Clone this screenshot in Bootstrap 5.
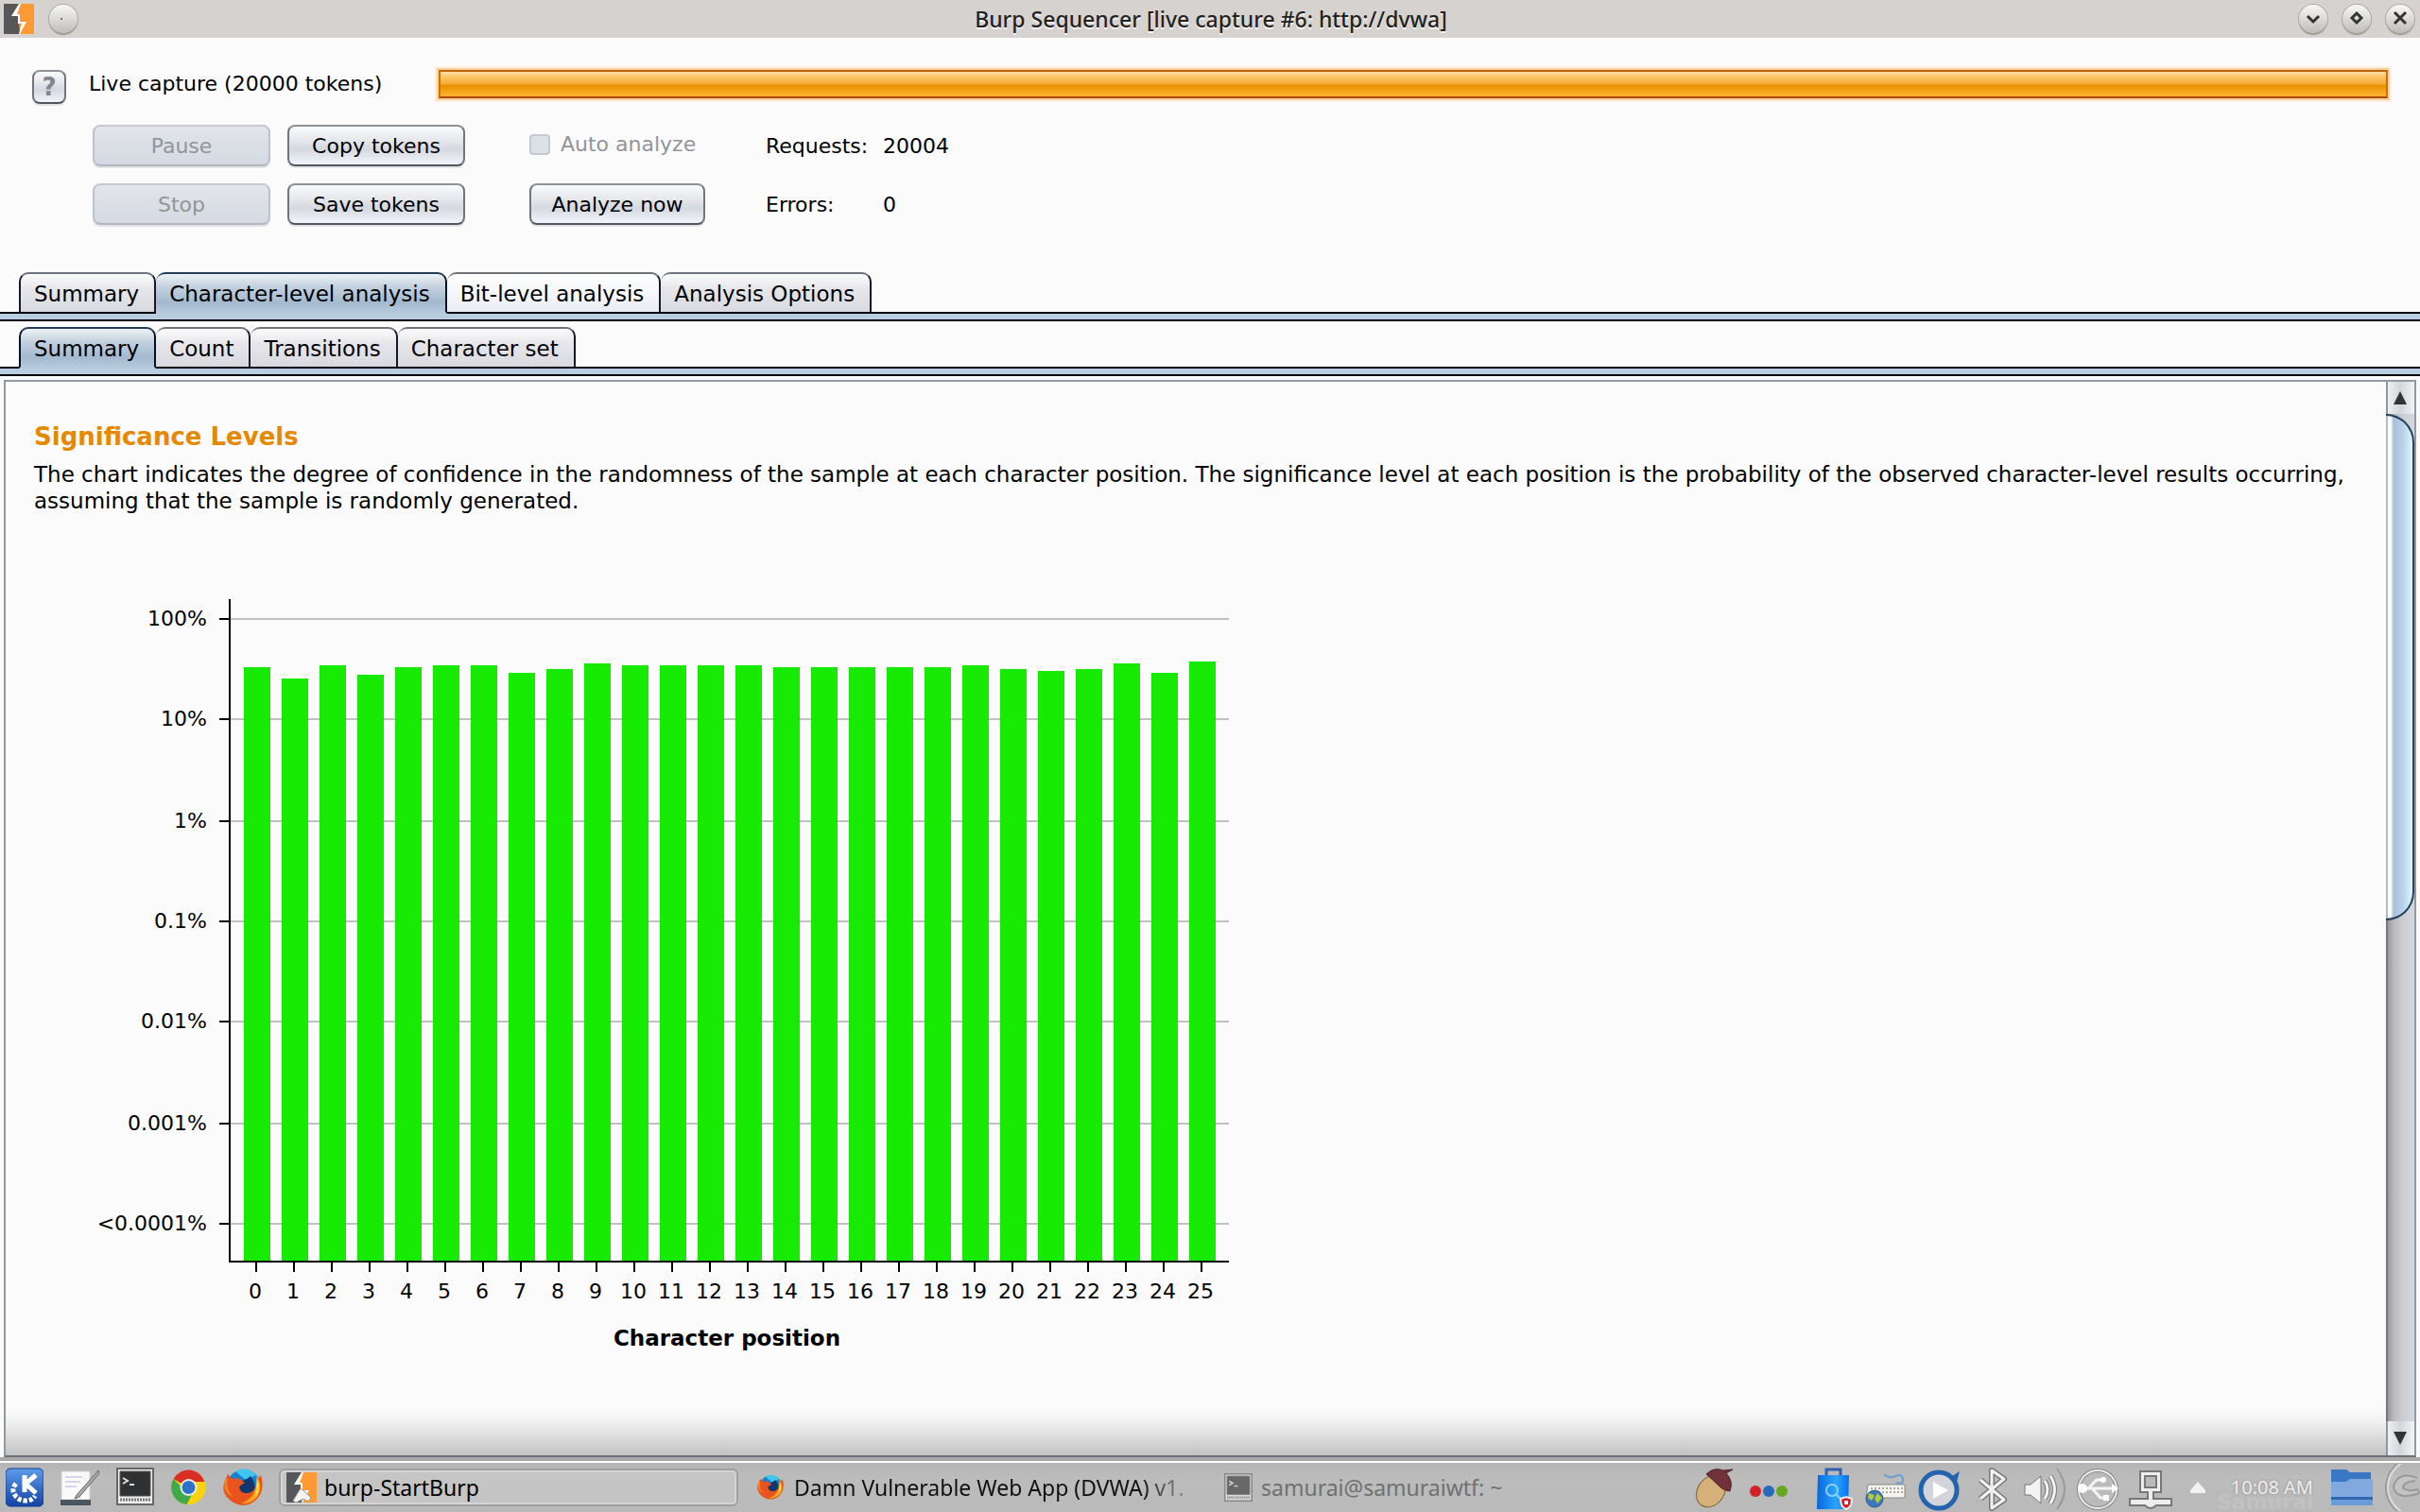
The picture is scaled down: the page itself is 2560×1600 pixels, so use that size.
<!DOCTYPE html>
<html lang="en">
<head>
<meta charset="utf-8">
<meta name="viewport" content="width=device-width, initial-scale=1">
<title>Burp Sequencer</title>
<link href="https://cdn.jsdelivr.net/npm/bootstrap@5.3.0/dist/css/bootstrap.min.css" rel="stylesheet">
<script src="https://cdn.jsdelivr.net/npm/bootstrap@5.3.0/dist/js/bootstrap.bundle.min.js"></script>
<style>
body{font:22px/28px "DejaVu Sans",sans-serif;color:#000;background:#fbfbfb;overflow:hidden}
svg{display:block;flex:none}
.ui-font{font-family:"Noto Sans","Open Sans",sans-serif}
.titlebar{height:40px;background:#d6d2cf;padding:4px 6px 4px 4px}
.titlebar h1{font-size:23px;line-height:32px;color:#222;text-shadow:0 2px #f4f2f0}
.title-side{width:130px}
.title-side.start{width:134px}
.round-btn{width:30px;height:30px;border:0;padding:0;border-radius:50%;background:linear-gradient(#f8f8f7,#bfbcb8);box-shadow:0 0 0 1px #aaa6a2,0 2px 1px #8b8884}
.help-btn{width:36px;height:36px;padding:0;line-height:30px;font-weight:700;font-size:26px;color:#83868e}
.nb{border:2px solid;border-color:#8d9499 #6f757c #505560;border-radius:8px;background:linear-gradient(#fafafb,#e6e8ec 35%,#d5d8df 60%,#f2f5fc);box-shadow:0 2px #e3e3e5}
.act{width:188px;height:44px;line-height:26px;padding:2px 0 0;color:#000;font-size:22px}
.nb:disabled{color:#92959a;border-color:#c5c9d3 #bdc1cb #b2b5bf;background:linear-gradient(#e2e5e9,#d5d9e2)}
.capture{padding:30px 30px 0 34px}
.capture .progress{height:30px;border:2px solid;border-color:#bc6000 #d07000 #ad4700;border-radius:0;margin-right:4px;box-shadow:0 0 0 2px #f7d3a0,0 0 0 4px #fcefdd}
.progress-bar{background:linear-gradient(#ffe0b0,#fdca70 15%,#f3ab35 50%,#e89000 54%,#ffb52e)}
.cap-label{flex:none;width:394px;padding:1px 0 0 24px}
.tick{width:22px;height:22px;margin:0 11px 0 0;appearance:none;border:2px solid #c5c9d3;border-radius:4px;background:#dce0e7}
.controls{padding:22px 0 50px 64px}
.g1{grid-template-columns:188px 188px;gap:18px}
.g2{margin-left:68px;gap:18px}
.auto{height:44px;color:#92959a;padding-bottom:2px}
.g2 .act{width:186px}
.g3{margin-left:64px;grid-template-columns:124px 124px;grid-auto-rows:44px;row-gap:18px;line-height:46px}
.g3 dt,.g3 dd{font-weight:400;margin:0}
.tabrow{padding-left:20px;border-bottom:2px solid #00000f;height:44px;font-size:23px}
.second{margin-top:6px}
.tabrow .nav-link{height:44px;margin-bottom:-2px;padding:4px 16px 0 14px;line-height:34px;color:#000;border:2px solid;border-color:#70737a #17192a #00000f;border-width:2px 2px 2px 0;border-radius:10px 10px 0 0;background:linear-gradient(#fbfbfc,#e6e6ea 40%,#d8d9df);margin-left:0}
.tabrow .nav-item:first-child .nav-link{border-left-width:2px}
.tabrow .nav-link.active{background:linear-gradient(#eef2f6,#c2d0de 35%,#a3b9cf 75%,#b5c9dc);border-color:#213c55 #061020 #b5c9dc;color:#000}
.tabrow .nav-link.light{background:linear-gradient(#fff,#f3f5f9 60%,#e9ecf3)}
.band{height:8px;background:#b8cde0;border-bottom:2px solid #00000f}
.result{margin:4px 4px 0;border:2px solid #9299a5;border-bottom-color:#6d707a;min-height:0}
.result-body{padding:44px 30px 0;background:linear-gradient(#fbfbfb,#fbfbfb) top/100% calc(100% - 52px) no-repeat,linear-gradient(#fbfbfb,#f2f2f2 30%,#c2c2c2) bottom/100% 52px no-repeat}
.result-body h2{font-size:26px;line-height:28px;font-weight:700;color:#e58900;margin-bottom:12px}
.result-body p{margin:0;font-size:23px;line-height:28px}
.chart{margin:60px 0 0 44px}
.vscroll{width:30px;background:linear-gradient(90deg,#777 0 2px,#999 2px,#b9b9bd 8px,#cdced2 18px,#d5d8e1)}
.vscroll button{height:36px;width:100%;border:0;padding:0;background:linear-gradient(90deg,#8f96a0 0 2px,#eef0f2 2px,#d2d6da 15px,#f2f3f5)}
.vscroll .up{height:34px}
.thumb{height:536px;border:2px solid #26415c;border-left:0;border-radius:0 30px 30px 0;background:linear-gradient(90deg,#b0bac8 0 2px,#fff 2px 5px,#a8bfd6 8px,#b9d2ea 18px,#dff6fb)}
.gutter{height:4px;background:#a9a9a9}
.taskbar{height:54px;border-top:2px solid #fff;background:linear-gradient(#b4b4b4,#bcbcbc 30%,#b9b9b9);padding-left:6px}
.launch{gap:17px;margin-right:17px}
.task{height:40px;font-size:23px;line-height:30px;color:#111;border:0;background:none;padding:0;white-space:nowrap}
.task.current{width:486px;border:2px solid #a0a0a0;border-radius:6px;background:#c5c5c5;box-shadow:inset 0 0 0 2px #d4d4d4;padding-left:6px;color:#000}
.task.faded{width:473px;margin-left:20px;gap:11px;-webkit-mask:linear-gradient(90deg,#000 86%,rgba(0,0,0,.5) 92%,transparent)}
.task.dimmed{margin-left:20px;color:#707070}
.tray{position:relative;z-index:0}
.tray-icons{margin-right:-4px}
.clock{font-size:20px;color:#eee;text-shadow:0 0 3px #888;margin:0 19px 0 27px}
.cash{margin-left:10px}
.water{position:absolute;z-index:-1;right:35px;bottom:-2px;width:180px;font:bold 22px/22px "DejaVu Sans",sans-serif;color:#c1c1c1}
</style>
</head>
<body class="d-flex flex-column vh-100">
<svg width="0" height="0" class="position-absolute">
<defs>
<symbol id="burp" viewBox="0 0 32 32"><path fill="#ff9933" d="M0 0h32v32H0z"/><path fill="#55575a" d="M0 0h17l-7 13 6-1v8l1 12H0z"/><path fill="#fff" d="M16 0h2l-4 11h3v8h7l-7 13h-1l3-11h-4v-8H8z"/></symbol>
<symbol id="fox" viewBox="0 0 42 42"><circle cx="22" cy="20" r="18" fill="#1683cc"/><path fill="#41c5ef" d="M13 4Q25-3 35 8L24 13z"/><path fill="#12366e" d="M16 15q9-2 13-6 7 9 3 19-8 9-16 0z"/><path fill="#e9531d" d="M5 7l5 5q5-2 9 1l4 3-6 4q1 8 9 7 9-1 10-14l4-5q5 16-5 26-11 10-24 3Q-4 28 2 14z"/><path fill="#ffa41b" d="M35 8q8 12 1 23-7 8-17 7 19-7 16-30z"/><path fill="#ffdc3c" d="M36 12q5 12-2 19 1-9 2-19z"/><path fill="#f58220" d="M5 11q-3 12 6 20-12-5-9-18z"/></symbol>
<symbol id="term" viewBox="0 0 40 40"><path fill="#eee" stroke="#666" stroke-width="2" d="M1 1h38v38H1z"/><path fill="#303132" stroke="#555" d="M4 4h32v26H4z"/><path d="M7 11l5 3-5 3m7 1h5" stroke="#ddd" stroke-width="2" fill="none"/><path d="M4 34h32" stroke="#777" stroke-width="3" stroke-dasharray="2 1"/></symbol>
<linearGradient id="blue" x2="0" y2="1"><stop stop-color="#5d9bea"/><stop offset="1" stop-color="#1443a4"/></linearGradient>
<linearGradient id="bag" x2="1" y2="0"><stop stop-color="#0767dd"/><stop offset=".6" stop-color="#2aa5ff"/><stop offset="1" stop-color="#0870ee"/></linearGradient>
</defs>
</svg>

<header class="titlebar ui-font d-flex align-items-center">
<div class="title-side start d-flex align-items-center"><svg width="32" height="32"><use href="#burp"/></svg><button class="round-btn ms-3" aria-label="Window menu"><svg width="30" height="30"><circle cx="13" cy="15" r="1" fill="#555"/></svg></button></div>
<h1 class="m-0 flex-grow-1 text-center">Burp Sequencer [live capture #6: http://dvwa]</h1>
<div class="title-side d-flex gap-3 justify-content-end">
<button class="round-btn" aria-label="Minimize"><svg width="30" height="30" fill="none" stroke="#333" stroke-width="3"><path d="M9 12l6 6 6-6"/></svg></button>
<button class="round-btn" aria-label="Maximize"><svg width="30" height="30" fill="none" stroke="#333" stroke-width="3"><path d="M15 9l5 5-5 5-5-5z"/></svg></button>
<button class="round-btn" aria-label="Close"><svg width="30" height="30" fill="none" stroke="#333" stroke-width="3"><path d="M9 8l12 12M21 8L9 20"/></svg></button>
</div>
</header>

<section class="capture">
<div class="d-flex align-items-start pt-1">
<button class="help-btn nb" aria-label="Help">?</button>
<div class="cap-label" id="cap">Live capture (20000 tokens)</div>
<div class="progress flex-grow-1" role="progressbar" aria-labelledby="cap" aria-valuenow="100" aria-valuemin="0" aria-valuemax="100"><div class="progress-bar" style="width:100%"></div></div>
</div>
<div class="d-flex controls">
<div class="d-grid g1"><button class="nb act" disabled>Pause</button><button class="nb act">Copy tokens</button><button class="nb act" disabled>Stop</button><button class="nb act">Save tokens</button></div>
<div class="d-flex flex-column g2"><label class="d-flex align-items-center auto"><input type="checkbox" class="tick" disabled>Auto analyze</label><button class="nb act">Analyze now</button></div>
<dl class="d-grid g3 mb-0"><dt>Requests:</dt><dd>20004</dd><dt>Errors:</dt><dd>0</dd></dl>
</div>
</section>

<ul class="nav nav-tabs tabrow flex-nowrap">
<li class="nav-item"><a class="nav-link" href="#">Summary</a></li><li class="nav-item"><a class="nav-link active" href="#">Character-level analysis</a></li><li class="nav-item"><a class="nav-link light" href="#">Bit-level analysis</a></li><li class="nav-item"><a class="nav-link" href="#">Analysis Options</a></li>
</ul>
<div class="band"></div>
<ul class="nav nav-tabs tabrow second flex-nowrap">
<li class="nav-item"><a class="nav-link active" href="#">Summary</a></li><li class="nav-item"><a class="nav-link" href="#">Count</a></li><li class="nav-item"><a class="nav-link" href="#">Transitions</a></li><li class="nav-item"><a class="nav-link" href="#">Character set</a></li>
</ul>
<div class="band"></div>

<main class="result d-flex flex-grow-1">
<div class="result-body flex-grow-1">
<h2>Significance Levels</h2>
<p>The chart indicates the degree of confidence in the randomness of the sample at each character position. The significance level at each position is the probability of the observed character-level results occurring, assuming that the sample is randomly generated.</p>
<svg id="chart" class="chart" width="1240" height="830" viewBox="80 604 1240 830" shape-rendering="crispEdges" font-size="22" role="img" aria-label="Significance levels by character position"></svg>
</div>
<div class="vscroll d-flex flex-column">
<button class="up" aria-label="Scroll up"><svg width="30" height="34"><path d="M8 24l7-14 7 14z" fill="#333"/></svg></button>
<div class="thumb"></div>
<button class="mt-auto" aria-label="Scroll down"><svg width="30" height="36"><path d="M8 11h14l-7 14z" fill="#333"/></svg></button>
</div>
</main>
<div class="gutter"></div>

<footer class="taskbar ui-font d-flex align-items-center">
<div class="d-flex align-items-center launch">
<svg width="40" height="42"><rect y="1" width="40" height="40" rx="5" fill="url(#blue)" stroke="#123d8c"/><path d="M20 8v18m12-18L21 17l11 10" stroke="#fff" stroke-width="5" fill="none"/><path d="M11 17q-5 5-2 11 4 7 12 7 7 0 10-5" fill="none" stroke="#fff" stroke-width="5" stroke-dasharray="4 2"/></svg>
<svg width="43" height="42"><path d="M2 4h30v30H2z" fill="#fafafa" stroke="#ccc"/><path d="M6 10h18M6 15h16M6 20h12" stroke="#d4d4ec" stroke-width="2"/><path d="M1 34h32v6H1z" fill="#4a5660"/><path d="M41 3L18 29l-2 4 5-2L42 6z" fill="#aaa" stroke="#666"/></svg>
<svg width="40" height="42"><use href="#term" height="40"/></svg>
<svg width="39" height="42" viewBox="0 0 38 42"><circle cx="19" cy="21" r="18" fill="#fbd20c"/><path d="M3 12a18 18 0 0 1 33 3H19v6z" fill="#dc2d23"/><path d="M3 12a18 18 0 0 0 14 27l8-15-11-1z" fill="#3eaa49"/><circle cx="19" cy="21" r="8" fill="#2d74c9" stroke="#eee" stroke-width="2"/></svg>
<svg width="42" height="42"><use href="#fox"/></svg>
</div>
<button class="task current d-flex align-items-center"><svg width="32" height="32"><use href="#burp"/><path d="M15 17l5 4 6 6-3 4-5-3-8 4-3-2z" fill="#f4f4f4" stroke="#999"/></svg><span class="ms-2">burp-StartBurp</span></button>
<button class="task faded d-flex align-items-center"><svg width="28" height="30"><use href="#fox"/></svg><span>Damn Vulnerable Web App (DVWA) v1.</span></button>
<button class="task dimmed d-flex align-items-center gap-2"><svg width="32" height="30" opacity=".6"><use href="#term"/></svg><span>samurai@samuraiwtf: ~</span></button>
<div class="tray d-flex align-items-center ms-auto">
<span class="water" aria-hidden="true">Samurai</span>
<svg class="tray-icons" width="532" height="50" viewBox="1788 1549 532 50">
<ellipse cx="1809" cy="1578" rx="14" ry="18" transform="rotate(35 1809 1578)" fill="#d5b078" stroke="#7c6138"/><path d="M1804 1560q8-8 18-4l10-1-7 4q8 8 4 19-8-1-13-7-6-6-12-11z" fill="#70313a" stroke="#4c2428"/>
<circle cx="1856" cy="1578" r="6" fill="#d32028"/><circle cx="1870" cy="1578" r="6" fill="#2769be"/><circle cx="1884" cy="1578" r="6" fill="#64a91c"/>
<path d="M1931 1562v-7h15v7" fill="none" stroke="#2d61ad" stroke-width="3"/><path d="M1922 1561h33l-1 36h-33z" fill="url(#bag)"/><circle cx="1937" cy="1577" r="6" fill="none" stroke="#8ed0ff" stroke-width="2"/><path d="M1941 1581l5 5" stroke="#8ed0ff" stroke-width="2"/><path d="M1946 1586l6-2 6 2q0 9-6 11-6-2-6-11z" fill="#db1820" stroke="#eee" stroke-width="2"/><path d="M1950 1588h4v4h-4z" fill="#fff"/>
<path d="M1975 1571h39v14h-41z" fill="#f4f4ed" stroke="#888"/><path d="M1978 1575h34m-34 4h34" stroke="#aaa" stroke-width="2" stroke-dasharray="2 2"/><path d="M1992 1560q5 5 12 2t8 3-7 4" fill="none" stroke="#6f9fcf" stroke-width="2"/><circle cx="1982" cy="1586" r="9" fill="#3d77b8" stroke="#2a5c94"/><path d="M1976 1580l6 2-3 6-4-3zm9 0l5 5-5 6-3-5z" fill="#b0cb3c"/>
<circle cx="2050" cy="1577" r="19" fill="#d2d4da" stroke="#2463ae" stroke-width="5"/><path d="M2064 1562l8-5-3 11z" fill="#2463ae"/><path d="M2045 1570l13 7-13 7z" fill="#fff" stroke="#fff" stroke-width="2"/>
<g fill="none" stroke-linejoin="round"><path d="M2094 1566l25 21-13 9v-40l13 9-25 21" stroke="#777" stroke-width="6"/><path d="M2094 1566l25 21-13 9v-40l13 9-25 21" stroke="#f2f2f2" stroke-width="3"/></g>
<path d="M2141 1571h6l11-9v29l-11-9h-6z" fill="#f4f4f4" stroke="#777"/><g fill="none" stroke="#777" stroke-width="5"><path d="M2162 1567q6 9 0 19M2168 1562q9 14 0 29"/></g><g fill="none" stroke="#f3f3f3" stroke-width="3"><path d="M2162 1567q6 9 0 19M2168 1562q9 14 0 29"/></g><path d="M2175 1554q16 22 0 43" fill="none" stroke="#999" stroke-width="2"/>
<circle cx="2218" cy="1576" r="20" fill="none" stroke="#888" stroke-width="4"/><circle cx="2218" cy="1576" r="20" fill="none" stroke="#eee" stroke-width="2"/><path d="M2201 1575h34m-27 0l9-9h6m-10 10l8 9h5" fill="none" stroke="#f5f5f5" stroke-width="3"/><circle cx="2202" cy="1575" r="5" fill="#fff"/><circle cx="2224" cy="1566" r="3" fill="#fff"/><path d="M2224 1582h6v6h-6zM2233 1570l7 5-7 5z" fill="#fff"/>
<path d="M2263 1557h22v22h-8v7h19v7h-16q-6 6-12 0h-16v-7h19v-7h-8z" fill="#eee" stroke="#777" stroke-width="2"/><path d="M2268 1562h12v12h-12z" fill="#bbb" stroke="#777" stroke-width="2"/>
</svg>
<svg width="16" height="12"><path d="M8 0l8 9v3H0V9z" fill="#f2f2f2"/></svg>
<span class="clock">10:08 AM</span>
<svg width="44" height="38"><path d="M0 0h16l4 3h22v10H0z" fill="#3a78c6"/><path d="M0 13h16l4-3h24v28H0z" fill="#80a9df"/><path d="M0 29h44v7H0z" fill="#2f68b1"/><path d="M0 32h44v6H0z" fill="#6b9bd8"/></svg>
<svg width="40" height="50" class="cash"><circle cx="36" cy="25" r="32" fill="none" stroke="#999" stroke-width="2"/><circle cx="36" cy="25" r="30" fill="none" stroke="#ddd" stroke-width="2"/><path d="M37 15q-20-8-25 9 2 13 20 9 10-1 5-6-9 3-15-1 0-7 13-8" fill="#c4c4c4" stroke="#999" stroke-width="2"/></svg>
</div>
</footer>
<script>
const tops=[706,718,704,714,706,704,704,712,708,702,704,704,704,704,706,706,706,706,706,704,708,710,708,702,712,700];
const grid=[["100%",654],["10%",760],["1%",868],["0.1%",974],["0.01%",1080],["0.001%",1188],["<0.0001%",1294]];
let s="";
const esc=t=>t.replace("<","&lt;");
grid.forEach(([t,y])=>{s+=`<rect x="244" y="${y}" width="1056" height="2" fill="#c0c0c0"/><rect x="232" y="${y}" width="10" height="2"/><text x="219" y="${y+8}" text-anchor="end">${esc(t)}</text>`});
tops.forEach((y,i)=>{const x=258+40*i;s+=`<rect x="${x}" y="${y}" width="28" height="${1334-y}" fill="#15ea00"/><rect x="${x+12}" y="1336" width="2" height="10"/><text x="${x+12}" y="1374" text-anchor="middle">${i}</text>`});
s+=`<rect x="242" y="634" width="2" height="702"/><rect x="242" y="1334" width="1058" height="2"/><text x="769" y="1424" text-anchor="middle" font-size="23" font-weight="700">Character position</text>`;
document.getElementById("chart").innerHTML=s;
</script>
</body>
</html>
